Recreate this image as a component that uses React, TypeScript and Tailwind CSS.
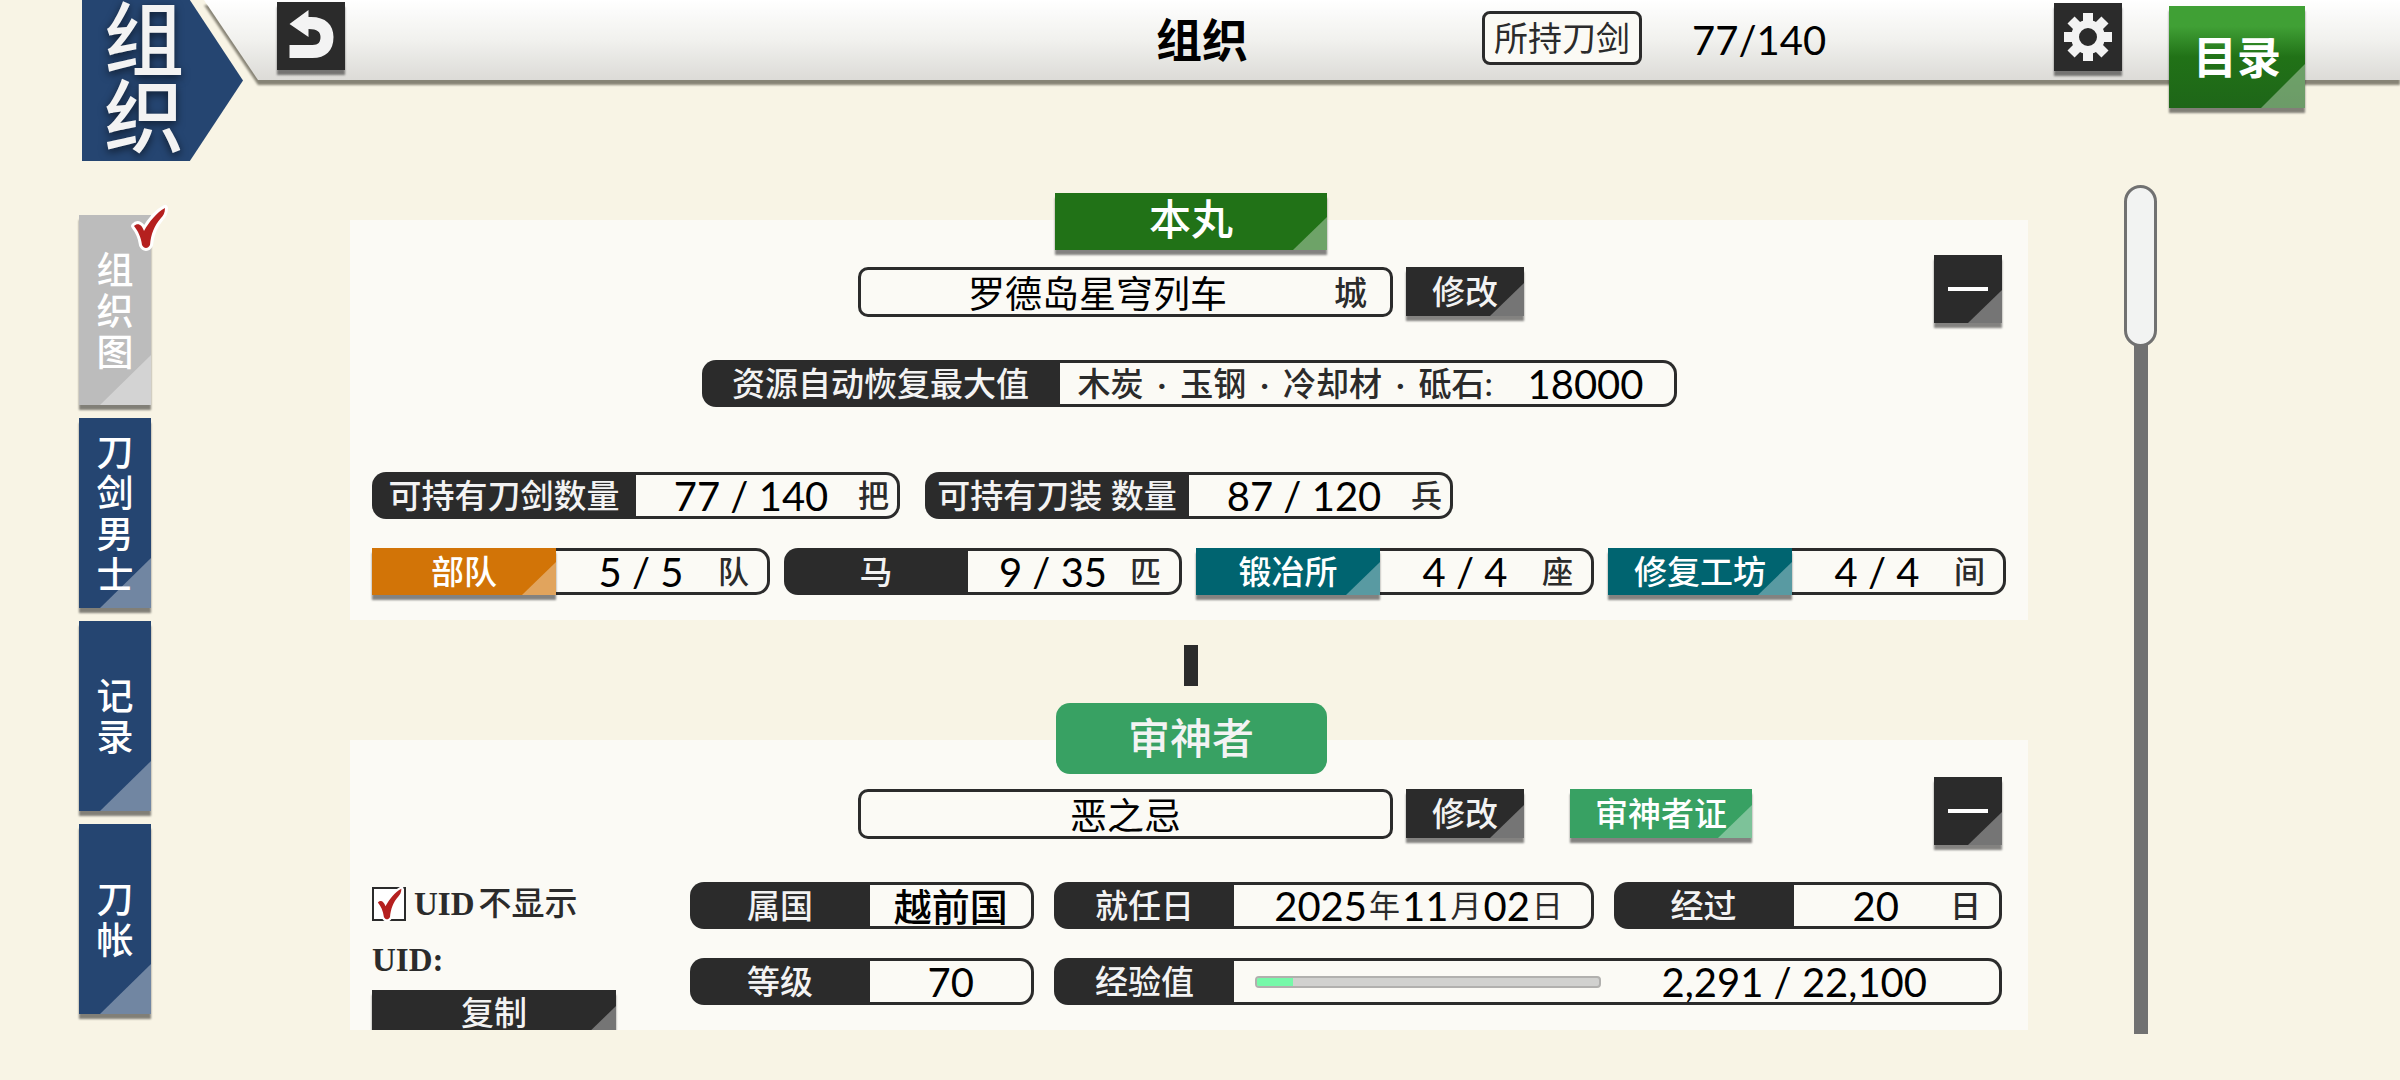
import { useState } from "react";
import type { ReactNode } from "react";
import clsx from "clsx";

const SHADOW = "shadow-[0_5px_2px_rgba(0,0,0,0.48)]";

const TABS = ["组织图", "刀剑男士", "记录", "刀帐"];

// light folded corner at the bottom right of buttons and tabs
const Corner = ({ className = "h-[33px] w-[34px]" }) => (
  <span
    aria-hidden="true"
    className={clsx(
      "absolute right-0 bottom-0 bg-white/35 [clip-path:polygon(100%_0,100%_100%,0_100%)]",
      className
    )}
  />
);

const Tick = ({ className = "" }) => (
  <svg viewBox="0 0 42 50" className={className} aria-hidden="true">
    <path
      d="M5 23C9 19 13 22 15 28C20 19 28 9 36 5C36 10 34 13 32 15C25 23 22 31 21 42C19 46 15 46 13 42C12 34 9 28 5 23Z"
      fill="#b5201f"
      stroke="#fff"
      strokeWidth="6"
      strokeLinejoin="round"
      paintOrder="stroke"
    />
  </svg>
);

const BackIcon = () => (
  <svg viewBox="0 0 67 68" className="h-full w-full" aria-hidden="true">
    <path
      d="M12 22L31 8V15C47 14 56 22 56 35C56 49 48 56 35 56H12V43H35C41 43 43 40 43 35C43 30 40 27 31 27V35Z"
      fill="#f3f3f3"
    />
  </svg>
);

const GearIcon = () => (
  <svg viewBox="0 0 68 68" className="h-full w-full" aria-hidden="true">
    <circle cx="34" cy="34" r="13" fill="none" stroke="#f3f3f3" strokeWidth="8" />
    {[0, 45, 90, 135, 180, 225, 270, 315].map((angle) => (
      <rect
        key={angle}
        x="29"
        y="10"
        width="10"
        height="11"
        fill="#f3f3f3"
        transform={`rotate(${angle} 34 34)`}
      />
    ))}
  </svg>
);

const DarkButton = ({ children, className = "w-[118px]" }) => (
  <button
    type="button"
    className={clsx(
      "relative h-[49px] shrink-0 bg-[#2b2b2b] text-[33px] leading-none font-medium text-[#f3f3f3]",
      SHADOW,
      className
    )}
  >
    <Corner />
    <span className="relative">{children}</span>
  </button>
);

const CollapseButton = ({ label }: { label: string }) => (
  <button
    type="button"
    aria-label={label}
    className={clsx(
      "relative -mt-3 ml-auto flex h-[68px] w-[68px] items-center justify-center bg-[#2b2b2b]",
      SHADOW
    )}
  >
    <Corner />
    <span className="relative h-1 w-10 bg-white" />
  </button>
);

type StatProps = {
  label: string;
  labelWidth?: string;
  color?: string;
  unit?: string;
  unitMargin?: string;
  className?: string;
  children: ReactNode;
};

const Stat = ({
  label,
  labelWidth = "w-[180px]",
  color,
  unit,
  unitMargin = "mr-[18px]",
  className,
  children,
}: StatProps) => (
  <div className={clsx("flex h-[47px]", className)}>
    {color ? (
      <button
        type="button"
        className={clsx(
          "relative shrink-0 text-[33px] leading-none font-medium text-white",
          SHADOW,
          color,
          labelWidth
        )}
      >
        <Corner />
        <span className="relative">{label}</span>
      </button>
    ) : (
      <div
        className={clsx(
          "flex shrink-0 items-center justify-center rounded-l-[14px] bg-[#2b2b2b] text-[33px] leading-none font-medium whitespace-pre text-[#f3f3f3]",
          labelWidth
        )}
      >
        {label}
      </div>
    )}
    <div className="flex min-w-0 flex-1 items-center rounded-r-[14px] border-y-3 border-r-3 border-[#2b2b2b] text-[40px] leading-none whitespace-nowrap text-black">
      <div className={clsx("flex-1 text-center", unit && "pl-2")}>{children}</div>
      {unit && (
        <span className={clsx("text-[31px] font-medium text-[#2b2b2b]", unitMargin)}>
          {unit}
        </span>
      )}
    </div>
  </div>
);

const NameRow = ({ label, value, onChange, suffix = "", extra = null }) => (
  <div className="grid h-[50px] grid-cols-[1fr_auto_1fr] items-start pr-1 pl-2">
    <span />
    <div className="flex gap-[13px]">
      <div className="flex h-[50px] w-[535px] items-center rounded-[10px] border-3 border-[#2b2b2b]">
        <input
          type="text"
          aria-label={label}
          value={value}
          onChange={(e) => onChange(e.target.value)}
          className="min-w-0 flex-1 bg-transparent text-center text-[37px] leading-none text-black outline-none"
        />
        {suffix && (
          <span className="mr-[23px] text-[33px] leading-none font-medium text-[#2b2b2b]">
            {suffix}
          </span>
        )}
      </div>
      <DarkButton>修改</DarkButton>
    </div>
    <div className="flex items-start pl-[46px]">
      {extra}
      <CollapseButton label="收起" />
    </div>
  </div>
);

const Header = () => (
  <header className="relative h-20 shrink-0">
    <div className="absolute inset-0 left-[204px] drop-shadow-[0_5px_1px_rgba(60,56,44,0.6)]">
      <div className="h-full bg-linear-to-b from-white via-[#f1f1ee] to-[#dcdbd7] [clip-path:polygon(0_0,100%_0,100%_100%,54px_100%)]" />
    </div>
    <div className="relative grid grid-cols-[1fr_auto_1fr] items-start">
      <div className="flex items-start">
        <div className="ml-[82px] h-[161px] w-[161px] bg-[#254571] pl-[22px] [clip-path:polygon(0_0,67%_0,100%_50%,67%_100%,0_100%)]">
          <div className="w-20 text-[80px] leading-[77px] font-medium break-all text-[#f3f3f3] [text-shadow:0_3px_8px_rgba(0,0,0,0.6)]">
            组织
          </div>
        </div>
        <button
          type="button"
          aria-label="返回"
          className={clsx("mt-0.5 ml-[34px] h-[68px] w-[68px] bg-[#2b2b2b]", SHADOW)}
        >
          <BackIcon />
        </button>
      </div>
      <h1 className="pl-1 text-[46px] leading-[80px] font-bold text-black">组织</h1>
      <div className="flex items-start pl-[234px]">
        <div className="mt-[11px] flex h-[54px] w-[160px] items-center justify-center rounded-lg border-3 border-[#2b2b2b] bg-[#fbfaf5] text-[34px] leading-none text-[#2b2b2b]">
          所持刀剑
        </div>
        <div className="ml-[50px] text-[40px] leading-[80px] text-black">77/140</div>
        <button
          type="button"
          aria-label="设置"
          className={clsx("mt-[3px] ml-auto h-[68px] w-[68px] bg-[#2b2b2b]", SHADOW)}
        >
          <GearIcon />
        </button>
        <button
          type="button"
          className={clsx(
            "relative mt-1.5 mr-[95px] ml-[47px] h-[102px] w-[136px] bg-linear-to-b from-[#40a035] from-20% via-[#217217] via-50% to-[#1e6618] text-[44px] leading-none font-bold text-white",
            SHADOW
          )}
        >
          <Corner className="h-[44px] w-[44px]" />
          <span className="relative">目录</span>
        </button>
      </div>
    </div>
  </header>
);

const App = () => {
  const [activeTab, setActiveTab] = useState(TABS[0]);
  const [castle, setCastle] = useState("罗德岛星穹列车");
  const [player, setPlayer] = useState("恶之忌");
  const [hideUid, setHideUid] = useState(true);
  const exp = { current: 2291, next: 22100 };

  return (
    <div className="flex h-screen flex-col bg-[#f8f4e5] font-[Lato,'Noto_Sans_CJK_SC',sans-serif]">
      <Header />

      <div className="flex min-h-0 flex-1 pt-[113px] pb-[50px] pl-[79px]">
        <nav className="flex w-[72px] shrink-0 flex-col gap-[13px] pt-[22px]">
          {TABS.map((tab) => (
            <button
              key={tab}
              type="button"
              onClick={() => setActiveTab(tab)}
              className={clsx(
                "relative flex h-[190px] shrink-0 items-center justify-center text-[37px] font-medium text-white",
                SHADOW,
                tab === activeTab ? "bg-[#bcbcbc]" : "bg-[#254571]"
              )}
            >
              <Corner className="h-[50px] w-[51px]" />
              {tab === activeTab && (
                <Tick className="absolute -top-3 -right-5 h-[50px] w-[42px] overflow-visible" />
              )}
              <span className="relative w-[37px] leading-[41px] break-all">{tab}</span>
            </button>
          ))}
        </nav>

        <main className="mr-24 ml-[199px] flex min-w-0 flex-1 flex-col items-center overflow-hidden">
          <h2
            className={clsx(
              "relative z-10 ml-1 h-[57px] w-[272px] shrink-0 bg-[#217217] text-center text-[42px] leading-[52px] font-medium text-white",
              SHADOW
            )}
          >
            <Corner />
            <span className="relative">本丸</span>
          </h2>

          <section className="-mt-[30px] w-full shrink-0 bg-[#fbfaf5] px-[22px] pt-[47px] pb-[25px]">
            <NameRow label="本丸" value={castle} onChange={setCastle} suffix="城" />

            <div className="mt-[43px] flex justify-center">
              <div className="flex h-[47px] w-[975px]">
                <div className="flex w-[358px] shrink-0 items-center justify-center rounded-l-[14px] bg-[#2b2b2b] text-[33px] leading-none font-medium text-[#f3f3f3]">
                  资源自动恢复最大值
                </div>
                <div className="flex flex-1 items-center justify-between rounded-r-[14px] border-y-3 border-r-3 border-[#2b2b2b] pr-[30px] pl-[18px] leading-none whitespace-nowrap">
                  <span className="flex gap-3.5 text-[33px] font-medium text-[#2b2b2b]">
                    <span>木炭</span>
                    <span>·</span>
                    <span>玉钢</span>
                    <span>·</span>
                    <span>冷却材</span>
                    <span>·</span>
                    <span>砥石:</span>
                  </span>
                  <span className="text-[40px] text-black">18000</span>
                </div>
              </div>
            </div>

            <div className="mt-[65px] flex gap-[25px]">
              <Stat
                label="可持有刀剑数量"
                labelWidth="w-[264px]"
                unit="把"
                unitMargin="mr-2"
                className="w-[528px]"
              >
                77 / 140
              </Stat>
              <Stat
                label="可持有刀装 数量"
                labelWidth="w-[264px]"
                unit="兵"
                unitMargin="mr-2"
                className="w-[528px]"
              >
                87 / 120
              </Stat>
            </div>

            <div className="mt-[29px] grid grid-cols-4 gap-3.5">
              <Stat label="部队" labelWidth="w-[184px]" color="bg-[#d27407]" unit="队">
                5 / 5
              </Stat>
              <Stat label="马" labelWidth="w-[184px]" unit="匹">
                9 / 35
              </Stat>
              <Stat label="锻冶所" labelWidth="w-[184px]" color="bg-[#006470]" unit="座">
                4 / 4
              </Stat>
              <Stat label="修复工坊" labelWidth="w-[184px]" color="bg-[#006470]" unit="间">
                4 / 4
              </Stat>
            </div>
          </section>

          <div className="mt-[25px] ml-1 h-[41px] w-3.5 shrink-0 bg-[#2b2b2b]" />

          <h2 className="relative z-10 mt-[17px] ml-1 h-[71px] w-[271px] shrink-0 rounded-[14px] bg-[#38a163] text-center text-[42px] leading-[71px] font-medium text-[#f3f3f3]">
            审神者
          </h2>

          <section className="-mt-[34px] w-full shrink-0 bg-[#fbfaf5] px-[22px] pt-[49px] pb-[25px]">
            <NameRow
              label="审神者"
              value={player}
              onChange={setPlayer}
              extra={
                <button
                  type="button"
                  className={clsx(
                    "relative h-[49px] w-[182px] bg-[#38a163] text-[33px] leading-none font-medium text-white",
                    SHADOW
                  )}
                >
                  <Corner />
                  <span className="relative">审神者证</span>
                </button>
              }
            />

            <div className="mt-[43px] flex pr-1">
              <div className="w-[318px] shrink-0 pt-[5px] font-['Liberation_Serif','Noto_Sans_CJK_SC',serif] text-[#2b2b2b]">
                <label className="flex h-[34px] items-center gap-2 leading-none">
                  <span className="relative h-[34px] w-[34px]">
                    <input
                      type="checkbox"
                      checked={hideUid}
                      onChange={(e) => setHideUid(e.target.checked)}
                      className="block h-full w-full appearance-none border-2 border-[#2b2b2b] bg-white"
                    />
                    {hideUid && (
                      <Tick className="pointer-events-none absolute -top-0.5 left-0.5 h-[38px] w-8" />
                    )}
                  </span>
                  <span className="text-[33px] font-bold">
                    UID<span className="ml-1 font-medium">不显示</span>
                  </span>
                </label>
                <p className="mt-[22px] mb-[13px] text-[33px] leading-[34px] font-bold">UID:</p>
                <DarkButton className="w-[244px]">复制</DarkButton>
              </div>

              <div className="grid flex-1 grid-cols-[345fr_540fr_389fr] content-start gap-x-5 gap-y-[29px]">
                <Stat label="属国">
                  <span className="text-[38px] font-medium">越前国</span>
                </Stat>
                <Stat label="就任日">
                  <span className="flex items-center justify-center gap-0.5 pl-3">
                    2025<span className="text-[31px] text-[#2b2b2b]">年</span>
                    11<span className="text-[31px] text-[#2b2b2b]">月</span>
                    02<span className="text-[31px] text-[#2b2b2b]">日</span>
                  </span>
                </Stat>
                <Stat label="经过" unit="日">
                  20
                </Stat>
                <Stat label="等级">70</Stat>
                <Stat label="经验值" className="col-span-2">
                  <div className="flex items-center pr-[72px] pl-[21px]">
                    <div className="h-3 w-[346px] overflow-hidden rounded-sm border-2 border-[#b1b0ae] bg-[#d1d1cf]">
                      <div
                        className="h-full bg-[#76f9a9]"
                        style={{ width: `${(exp.current / exp.next) * 100}%` }}
                      />
                    </div>
                    <span className="ml-auto">
                      {exp.current.toLocaleString("en-US")} / {exp.next.toLocaleString("en-US")}
                    </span>
                  </div>
                </Stat>
              </div>
            </div>
          </section>
        </main>

        {/* scrollbar */}
        <div className="-mt-2 mr-[243px] -mb-1 flex w-[33px] shrink-0 flex-col items-center">
          <div className="h-[162px] w-full shrink-0 rounded-full border-3 border-[#717171] bg-[#f2f3f2]" />
          <div className="-mt-0.5 w-3.5 flex-1 bg-[#717171]" />
        </div>
      </div>
    </div>
  );
};

export default App;
